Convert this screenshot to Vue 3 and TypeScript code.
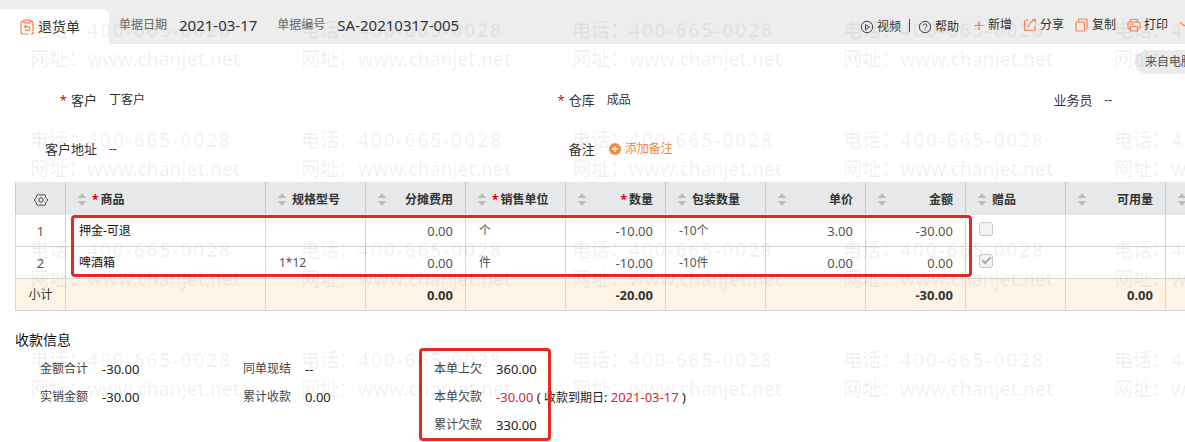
<script setup lang="ts">
interface Column {
  key: string
  title: string
  required?: boolean
  numeric?: boolean
}

type Cell = string | boolean

const columns: Column[] = [
  { key: 'goods', title: '商品', required: true },
  { key: 'spec', title: '规格型号' },
  { key: 'fee', title: '分摊费用', numeric: true },
  { key: 'unit', title: '销售单位', required: true },
  { key: 'qty', title: '数量', required: true, numeric: true },
  { key: 'packQty', title: '包装数量' },
  { key: 'price', title: '单价', numeric: true },
  { key: 'amount', title: '金额', numeric: true },
  { key: 'gift', title: '赠品' },
  { key: 'available', title: '可用量', numeric: true },
  { key: 'next', title: '' },
]

const rows: Record<string, Cell>[] = [
  { goods: '押金-可退', fee: '0.00', unit: '个', qty: '-10.00', packQty: '-10个', price: '3.00', amount: '-30.00', gift: false },
  { goods: '啤酒箱', spec: '1*12', fee: '0.00', unit: '件', qty: '-10.00', packQty: '-10件', price: '0.00', amount: '0.00', gift: true },
]

const totals: Record<string, string> = { fee: '0.00', qty: '-20.00', amount: '-30.00', available: '0.00' }
</script>

<template>
  <div class="page">
    <header class="topbar">
      <div class="tab">
        <svg class="icon orange" width="14" height="16" viewBox="0 0 14 16">
          <path d="M4 2.200H3a2 2 0 0 0-2 2V13a2 2 0 0 0 2 2h5.500M10 2.200h1a2 2 0 0 1 2 2V12M4 1.200h6v2.600H4zM10.500 15H11a2 2 0 0 0 2-2M6 6 4.200 7.700 6 9.400M4.500 7.700H8a1.800 1.800 0 0 1 0 3.600H5" />
        </svg>
        <span>退货单</span>
      </div>
      <dl class="meta">
        <div><dt>单据日期</dt><dd>2021-03-17</dd></div>
        <div><dt>单据编号</dt><dd>SA-20210317-005</dd></div>
      </dl>
      <nav class="tools">
        <button type="button" class="help">
          <svg class="icon" width="14" height="14" viewBox="0 0 14 14"><circle cx="7" cy="7" r="5.700" /><path d="M5.500 4.500v5L9.500 7z" /></svg>
          视频
        </button>
        <span class="divider"></span>
        <button type="button" class="help second">
          <svg class="icon" width="14" height="14" viewBox="0 0 14 14"><circle cx="7" cy="7" r="5.700" /><path d="M5.200 5.700a1.800 1.800 0 1 1 2.700 1.500c-.7.400-.9.700-.9 1.300M7 9.500v1" /></svg>
          帮助
        </button>
        <button type="button" class="action">
          <svg class="icon orange" width="12" height="14" viewBox="0 0 12 14"><path d="M1.500 7.500h9M6 3v9" /></svg>
          新增
        </button>
        <button type="button" class="action">
          <svg class="icon orange" width="14" height="14" viewBox="0 0 14 14"><path d="M5.500 2H3a1.500 1.500 0 0 0-1.500 1.500V11A1.500 1.500 0 0 0 3 12.500h7.500A1.500 1.500 0 0 0 12 11V8M9 1.500h3.500V5M12.300 1.700C8.500 3 6 5.500 5.500 9" /></svg>
          分享
        </button>
        <button type="button" class="action">
          <svg class="icon orange" width="14" height="14" viewBox="0 0 14 14"><rect x="1" y="4" width="8.500" height="9" rx="1" /><path d="M3.500 4V2a1 1 0 0 1 1-1H11a1 1 0 0 1 1 1v8a1 1 0 0 1-1 1H9.500" /></svg>
          复制
        </button>
        <button type="button" class="action">
          <svg class="icon orange" width="14" height="14" viewBox="0 0 14 14"><path d="M3.500 4V1.500h7V4M3.500 11h-1A1.500 1.500 0 0 1 1 9.500v-4A1.500 1.500 0 0 1 2.500 4h9A1.500 1.500 0 0 1 13 5.500v4a1.500 1.500 0 0 1-1.500 1.500h-1M3.500 8.500h7v4.500h-7zM3.500 6.200h3" /></svg>
          打印
        </button>
        <button type="button" class="more" aria-label="更多打印选项">
          <svg class="icon orange" width="10" height="14" viewBox="0 0 10 14"><path d="M1 4l4 4 4-4" /></svg>
        </button>
      </nav>
    </header>

    <div class="source"><span>来自电脑</span></div>

    <section class="fields">
      <div class="field"><span class="label"><i class="star">*</i>客户</span><span>丁客户</span></div>
      <div class="field"><span class="label"><i class="star">*</i>仓库</span><span>成品</span></div>
      <div class="field"><span class="label">业务员</span><span>--</span></div>
      <div class="field"><span class="label">客户地址</span><span>--</span></div>
      <div class="field">
        <span class="label">备注</span>
        <button type="button" class="add">
          <svg width="12" height="12" viewBox="0 0 12 12"><circle cx="6" cy="6" r="6" fill="#fb8a3e" /><path d="M3 6h6M6 3v6" stroke="#fff" stroke-width="1.400" /></svg>
          添加备注
        </button>
      </div>
    </section>

    <div class="grid-wrap">
      <table class="grid">
        <colgroup>
          <col class="col-index" />
          <col v-for="column in columns" :key="column.key" :class="column.key === 'goods' ? 'col-goods' : 'col'" />
        </colgroup>
        <thead>
          <tr>
            <th class="index">
              <button type="button" class="gear" aria-label="列设置">
                <svg class="icon" width="16" height="16" viewBox="0 0 16 16"><path d="M5.300 2.300 6.800 3h2.400l1.500-.7 1.700 1 .2 1.800 1 1.600L15 8l-1.400 1.300-1 1.600-.2 1.800-1.700 1-1.500-.7H6.800l-1.500.7-1.700-1-.2-1.800-1-1.600L1 8l1.400-1.300 1-1.600.2-1.800z" /><circle cx="8" cy="8" r="2.200" /></svg>
              </button>
            </th>
            <th v-for="column in columns" :key="column.key">
              <div class="head" :class="{ numeric: column.numeric }">
                <svg class="sort" width="8" height="13" viewBox="0 0 8 13"><path d="M0 5 4 0l4 5zM0 8h8l-4 5z" /></svg>
                <span><i v-if="column.required" class="star">*</i>{{ column.title }}</span>
              </div>
            </th>
          </tr>
        </thead>
        <tbody>
          <tr v-for="(row, index) in rows" :key="index">
            <td class="index">{{ index + 1 }}</td>
            <td v-for="column in columns" :key="column.key" :class="[column.key, { numeric: column.numeric }]">
              <input v-if="column.key === 'gift'" type="checkbox" class="check" :checked="row.gift === true" disabled :aria-label="column.title" />
              <template v-else>{{ row[column.key] }}</template>
            </td>
          </tr>
        </tbody>
        <tfoot>
          <tr>
            <td class="index subtotal">小计</td>
            <td v-for="column in columns" :key="column.key" class="numeric">{{ totals[column.key] }}</td>
          </tr>
        </tfoot>
      </table>
      <div class="mark goods-mark"></div>
    </div>

    <section class="payment">
      <h2>收款信息</h2>
      <div class="sums">
        <dl>
          <div><dt>金额合计</dt><dd>-30.00</dd></div>
          <div><dt>实销金额</dt><dd>-30.00</dd></div>
        </dl>
        <dl>
          <div><dt>同单现结</dt><dd>--</dd></div>
          <div><dt>累计收款</dt><dd>0.00</dd></div>
        </dl>
        <div class="debts">
          <dl>
            <div><dt>本单上欠</dt><dd>360.00</dd></div>
            <div><dt>本单欠款</dt><dd><b>-30.00</b> ( <span class="due">收款到期日:</span> <b>2021-03-17</b> )</dd></div>
            <div><dt>累计欠款</dt><dd>330.00</dd></div>
          </dl>
          <div class="mark debt-mark"></div>
        </div>
      </div>
    </section>

    <div class="watermark" aria-hidden="true">
      <div v-for="n in 20" :key="n">
        <div>电话：<span class="phone">400-665-0028</span></div>
        <div>网址：www.chanjet.net</div>
      </div>
    </div>
  </div>
</template>

<style>
body {
  margin: 0;
  background: #fff;
}
</style>

<style scoped>
.page {
  position: relative;
  overflow: hidden;
  padding-bottom: 2px;
  font: 12px/20px "Noto Sans", "Noto Sans CJK SC", sans-serif;
  color: #333;
}
button {
  display: inline-flex;
  align-items: center;
  padding: 0;
  border: 0;
  background: none;
  font: inherit;
  color: inherit;
  white-space: nowrap;
}
dl,
dd,
h2 {
  margin: 0;
}
.icon {
  flex: none;
  fill: none;
  stroke: #444;
  stroke-width: 1;
}
.orange {
  stroke: #fb7f50;
  stroke-width: 1.2;
}
.star {
  margin-right: 4px;
  color: #e60012;
  font-style: normal;
}
.topbar {
  display: flex;
  height: 44px;
  background: #ededed;
}
.tab {
  display: flex;
  align-items: center;
  gap: 4px;
  box-sizing: border-box;
  width: 109px;
  height: 35px;
  margin-top: 9px;
  padding-left: 20px;
  border-radius: 0 6px 0 0;
  background: #fff;
  font-size: 14px;
}
.meta {
  display: flex;
  gap: 20px;
  padding: 15px 0 0 10px;
}
.meta div {
  display: flex;
  align-items: center;
  height: 20px;
  gap: 12px;
}
.meta dt {
  color: #666;
}
.meta dd {
  font-size: 15px;
}
.tools {
  display: flex;
  align-items: center;
  align-self: flex-start;
  height: 20px;
  margin: 15px -4px 0 auto;
}
.help {
  gap: 3px;
  padding-top: 3px;
}
.second {
  margin-right: 14px;
}
.divider {
  width: 1px;
  height: 13px;
  margin: 0 8px;
  background: #444;
}
.action {
  gap: 3px;
  margin-right: 11px;
}
.source {
  display: flex;
  justify-content: flex-end;
  margin-top: 6px;
}
.source span {
  width: 50px;
  margin-right: -10px;
  padding: 2px 0 2px 10px;
  border-radius: 12px 0 0 12px;
  background: #ebebeb;
  color: #555;
  white-space: nowrap;
}
.fields {
  display: grid;
  grid-template-columns: 42fr 42fr 16fr;
  grid-auto-rows: 20px;
  row-gap: 29px;
  padding: 16px 0 23px;
}
.field {
  display: flex;
  align-items: center;
  gap: 12px;
}
.label {
  width: 97px;
  font-size: 13px;
  text-align: right;
}
.label .star {
  margin-right: 4px;
}
.add {
  gap: 4px;
  margin-left: 2px;
  color: #f28544;
}
.grid-wrap {
  position: relative;
  margin-left: 15px;
}
.grid {
  width: 1250px;
  border-collapse: collapse;
  table-layout: fixed;
}
.col-index {
  width: 50px;
}
.col-goods {
  width: 200px;
}
.col {
  width: 100px;
}
.grid th,
.grid td {
  box-sizing: border-box;
  height: 32px;
  padding: 0 12px 0 13px;
  border: 1px solid #d6d6d6;
  text-align: left;
  color: #555;
}
.grid th {
  padding: 2px 12px 0;
  border-color: #c6c8ca;
  border-top-color: #e6e8ea;
  border-bottom-color: #e6e8ea;
  background: #e6e8ea;
  color: #333;
}
.grid .index {
  padding: 0;
  font-size: 13px;
  text-align: center;
}
.grid .numeric {
  font-size: 13px;
  text-align: right;
}
.grid .goods {
  color: #111;
}
.grid tfoot td {
  background: #fef4e6;
  color: #333;
}
.grid tfoot .numeric {
  font-weight: 700;
}
.grid .subtotal {
  font-size: 12px;
}
.gear {
  vertical-align: middle;
}
.head {
  display: flex;
  align-items: center;
  gap: 6px;
}
.grid .head.numeric {
  justify-content: space-between;
  font-size: 12px;
}
.head .star {
  margin-right: 2px;
}
.sort {
  flex: none;
  fill: #b9bbbd;
}
.check {
  display: flex;
  align-items: center;
  justify-content: center;
  appearance: none;
  box-sizing: border-box;
  width: 14px;
  height: 14px;
  margin: 0 0 4px;
  border: 1px solid #c9c9c9;
  border-radius: 3px;
  background: #f2f2f2;
}
.check:checked::after {
  content: "";
  width: 7px;
  height: 3px;
  margin-bottom: 3px;
  border: solid #aaa;
  border-width: 0 0 2px 2px;
  transform: rotate(-45deg);
}
.mark {
  position: absolute;
  box-sizing: border-box;
  border: 3px solid #e8291f;
  border-radius: 4px;
  pointer-events: none;
}
.goods-mark {
  top: 33px;
  left: 56px;
  width: 901px;
  height: 62px;
}
.payment {
  padding: 19px 15px 0;
}
.payment h2 {
  font-size: 14px;
  font-weight: 400;
  line-height: 20px;
  color: #111;
}
.sums {
  display: flex;
  margin: 5px 0 0 25px;
}
.sums > dl:first-child {
  width: 203px;
}
.sums > dl:nth-child(2) {
  width: 191px;
}
.sums dl > div {
  display: flex;
  align-items: center;
  gap: 14px;
  height: 28px;
}
.sums dt {
  color: #444;
}
.sums dd {
  font-size: 13px;
  color: #222;
}
.sums b {
  font-weight: 400;
  color: #d9262c;
}
.due {
  font-size: 12px;
}
.debts {
  position: relative;
}
.debt-mark {
  top: -7px;
  left: -15px;
  width: 132px;
  height: 93px;
}
.watermark {
  position: absolute;
  inset: 0;
  display: grid;
  grid-template-columns: repeat(5, 271px);
  grid-auto-rows: 110px;
  padding: 16px 0 0 30px;
  overflow: hidden;
  font-size: 19px;
  font-weight: 500;
  line-height: 29px;
  color: rgba(0, 0, 0, 0.06);
  white-space: nowrap;
  pointer-events: none;
}
.phone {
  letter-spacing: 2px;
}
</style>
